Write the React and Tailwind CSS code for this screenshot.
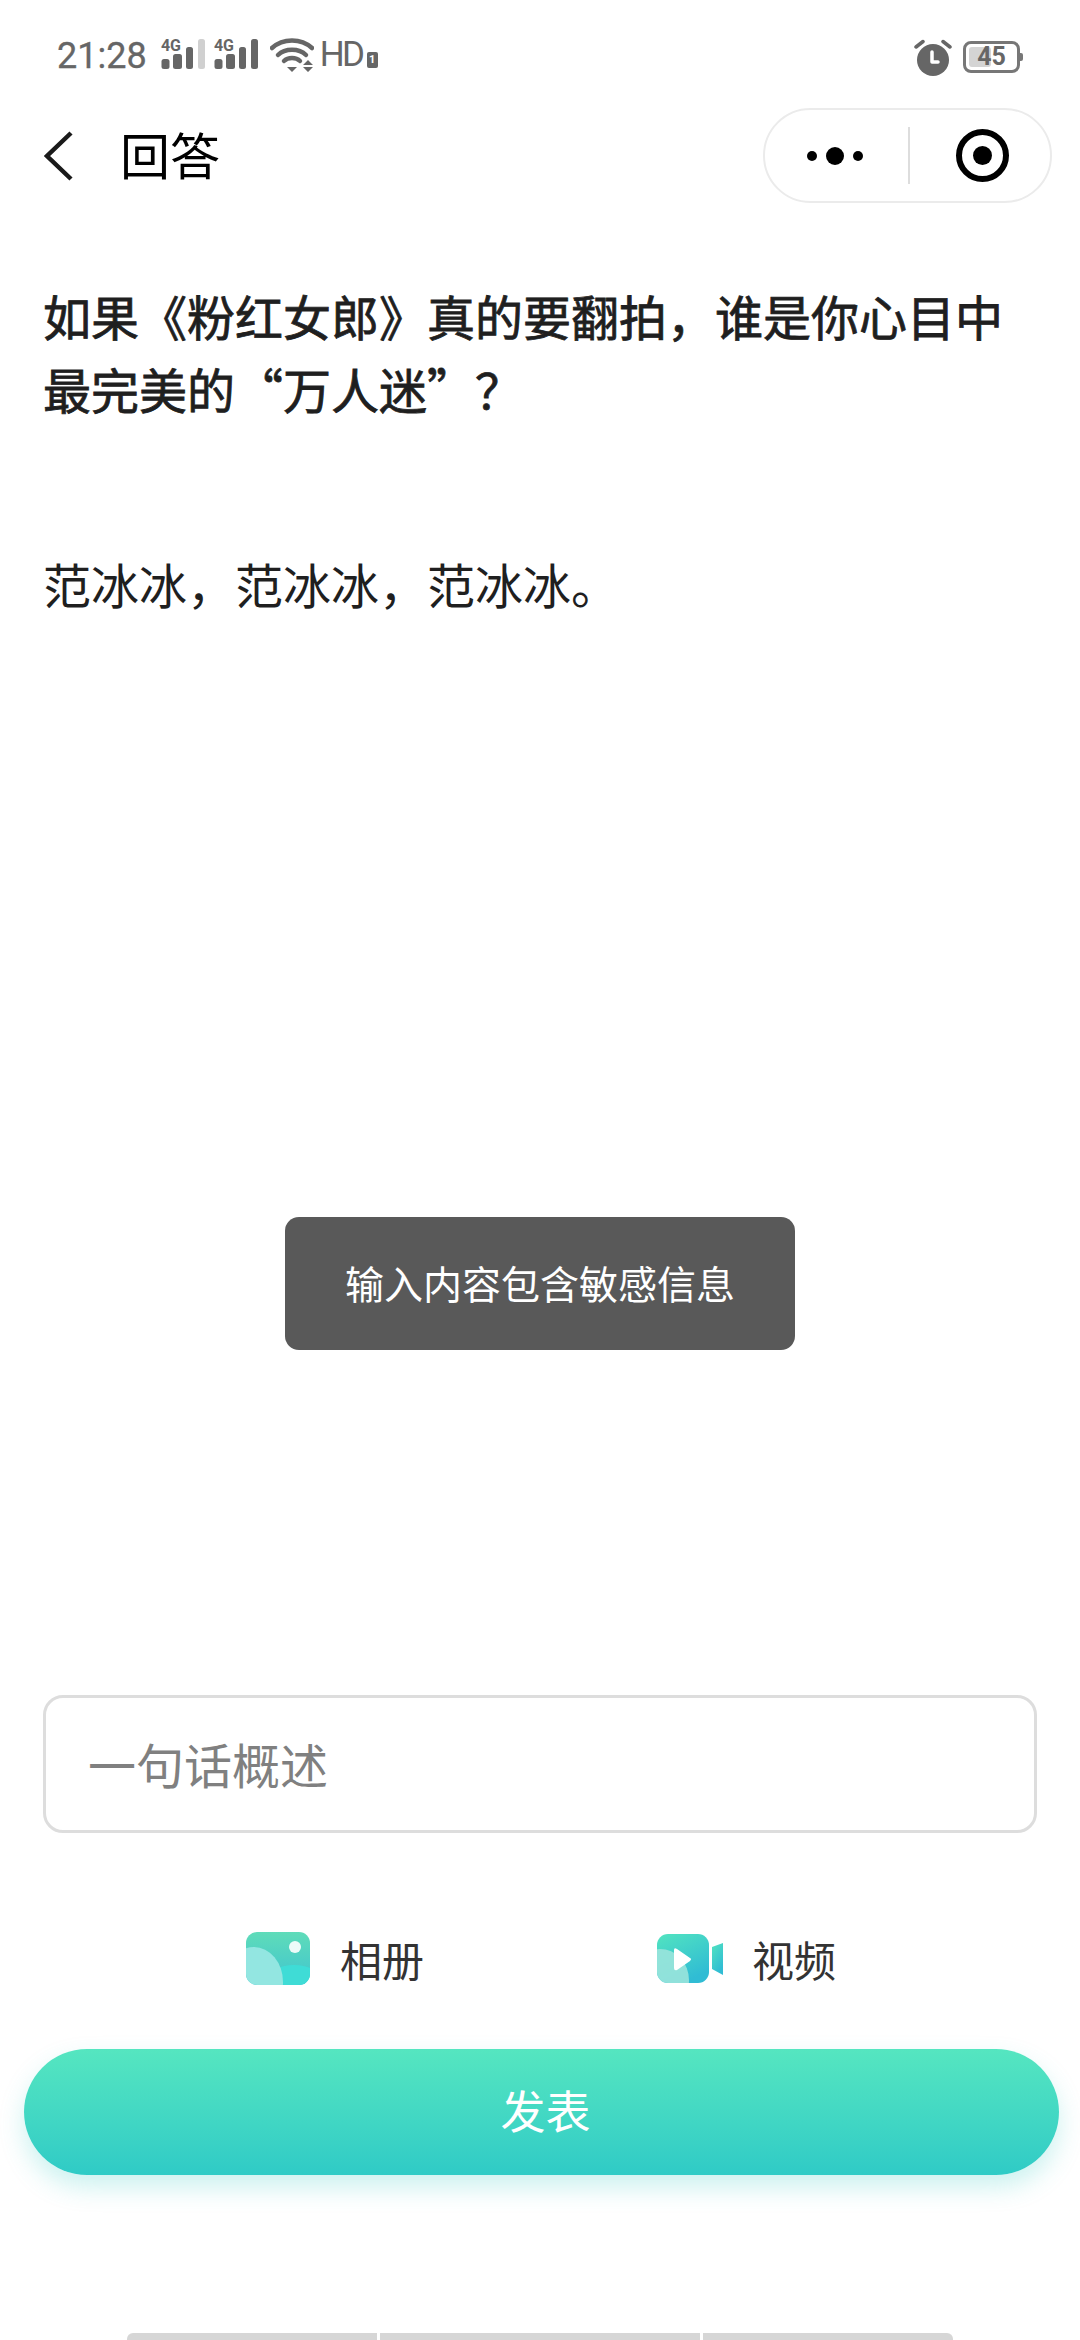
function Signal({ last }) {
  return (
    <svg width="44" height="32" viewBox="0 0 44 32" className="shrink-0 overflow-visible">
      <text x="0" y="12" fontSize="16" fontWeight="700" fontFamily="Roboto, sans-serif" fill="#666" textLength="20">4G</text>
      <rect x="0.5" y="20" width="8" height="10" rx="2.5" fill="#666" />
      <rect x="12" y="15" width="9" height="15" rx="2.5" fill="#666" />
      <rect x="25" y="8" width="7" height="22" rx="2.5" fill="#666" />
      <rect x="37" y="0" width="7" height="30" rx="2.5" fill={last} />
    </svg>
  );
}

function Wifi() {
  return (
    <svg width="44" height="34" viewBox="0 0 44 34" className="shrink-0">
      <path d="M2 10 C13 0 31 0 42 10" fill="none" stroke="#666" strokeWidth="4.5" strokeLinecap="round" />
      <path d="M8 17 C15 10 29 10 36 17" fill="none" stroke="#666" strokeWidth="4.5" strokeLinecap="round" />
      <path d="M14 23 C18 19 26 19 30 23" fill="none" stroke="#666" strokeWidth="4.5" strokeLinecap="round" />
      <path d="M17 29 H27 L22 34 Z" fill="#666" />
      <path d="M38 22 L43 27 H33 Z M33 29 H43 L38 34 Z" fill="#666" />
    </svg>
  );
}

function Alarm() {
  return (
    <svg width="38" height="38" viewBox="0 0 38 38">
      <circle cx="19" cy="22" r="16" fill="#666" />
      <path d="M2 9 L9 3.5 M36 9 L29 3.5" stroke="#666" strokeWidth="3.5" strokeLinecap="round" />
      <path d="M18 14 V24 H24" fill="none" stroke="#fff" strokeWidth="3.5" strokeLinecap="round" strokeLinejoin="round" />
    </svg>
  );
}

function AlbumIcon() {
  return (
    <svg width="64" height="53" viewBox="0 0 64 53">
      <defs>
        <linearGradient id="albumBg" x1="0" y1="0" x2="0" y2="1">
          <stop offset="0" stopColor="#5fdcb9" />
          <stop offset="1" stopColor="#3fc4d0" />
        </linearGradient>
        <clipPath id="albumClip">
          <rect width="64" height="53" rx="11" />
        </clipPath>
      </defs>
      <g clipPath="url(#albumClip)">
        <rect width="64" height="53" fill="url(#albumBg)" />
        <ellipse cx="48" cy="50" rx="28" ry="17" fill="#3fdcd6" />
        <ellipse cx="8" cy="50" rx="29" ry="35" fill="#93e6e1" />
      </g>
      <circle cx="49" cy="15" r="6" fill="#fff" fillOpacity="0.9" />
    </svg>
  );
}

function VideoIcon() {
  return (
    <svg width="66" height="49" viewBox="0 0 66 49">
      <defs>
        <linearGradient id="videoBg" x1="0" y1="0" x2="0.5" y2="1">
          <stop offset="0" stopColor="#52e4c0" />
          <stop offset="1" stopColor="#30bcd4" />
        </linearGradient>
        <clipPath id="videoClip">
          <rect width="52" height="49" rx="11" />
        </clipPath>
      </defs>
      <g clipPath="url(#videoClip)">
        <rect width="52" height="49" fill="url(#videoBg)" />
        <ellipse cx="3" cy="46" rx="29" ry="31" fill="#9ae4dc" fillOpacity="0.9" />
      </g>
      <path d="M17 16 Q17 13 20 15 L33 24 Q35 25 33 27 L20 36 Q17 37 17 34 Z" fill="#fff" />
      <path d="M55 13 L66 9 V41 L55 35 Z" fill="url(#videoBg)" />
    </svg>
  );
}

export default function App() {
  return (
    <div lang="zh-CN" className="relative h-[2340px] w-[1080px] flex flex-col overflow-hidden bg-white font-['Noto_Sans_CJK_SC',sans-serif] text-[#1a1a1a]">

      {/* status bar */}
      <div className="h-[108px] pt-[38px] pl-[57px] pr-[57px] flex items-start justify-between">
        <div className="flex items-start">
          <span className="font-['Roboto',sans-serif] [-webkit-text-stroke:0.3px_#666] text-[36px] leading-[36px] text-[#666] mr-[14px]">21:28</span>
          <div className="mr-[9px] mt-[1px]"><Signal last="#d0d0d0" /></div>
          <div className="mr-[12px] mt-[1px]"><Signal last="#666" /></div>
          <Wifi />
          <span className="ml-[6px] font-['Roboto',sans-serif] text-[35px] leading-[34px] tracking-[-2.5px] text-[#666]">HD</span>
          <span className="ml-[4px] mt-[14px] w-[11px] h-[16px] rounded-[2px] bg-[#666] text-white font-['Roboto',sans-serif] font-bold text-[11px] leading-[16px] text-center">1</span>
        </div>
        <div className="flex items-center gap-[11px]">
          <Alarm />
          <div className="relative flex items-center">
            <div className="relative w-[57px] h-[32px] rounded-[8px] border-[3px] border-[#777] flex items-center justify-center">
              <div className="absolute left-[3px] top-[3px] bottom-[3px] w-[22px] rounded-[3px] bg-[#d4d4d4]"></div>
              <span className="relative font-['Roboto',sans-serif] font-bold text-[25px] leading-[26px] text-[#666]">45</span>
            </div>
            <div className="w-[3px] h-[8px] rounded-r-[2px] bg-[#777]"></div>
          </div>
        </div>
      </div>

      {/* nav */}
      <div className="h-[95px] flex items-center justify-between pl-[44px] pr-[28px]">
        <div className="flex items-center">
          <svg width="30" height="50" viewBox="0 0 30 50" className="mr-[46px]">
            <path d="M27 2 L3 25 L27 48" fill="none" stroke="#1a1a1a" strokeWidth="4.5" />
          </svg>
          <span className="text-[50px] leading-[64px] text-black mb-[6px]">回答</span>
        </div>
        <div className="w-[289px] h-[95px] rounded-full border-2 border-[#ebebeb] flex items-center">
          <div className="w-[143px] flex items-center justify-center gap-[9px] pr-[3px]">
            <span className="w-[10px] h-[10px] rounded-full bg-black"></span>
            <span className="w-[18px] h-[18px] rounded-full bg-black"></span>
            <span className="w-[10px] h-[10px] rounded-full bg-black"></span>
          </div>
          <div className="w-[2px] h-[57px] bg-[#ddd]"></div>
          <div className="flex-1 flex items-center justify-center pl-[5px]">
            <div className="w-[53px] h-[53px] rounded-full border-[6px] border-black flex items-center justify-center">
              <span className="w-[19px] h-[19px] rounded-full bg-black"></span>
            </div>
          </div>
        </div>
      </div>

      {/* question and answer */}
      <div className="px-[43px] pt-[76px]">
        <h1 className="text-[48px] leading-[73px] font-normal [-webkit-text-stroke:0.8px_#1f1f1f] text-[#1f1f1f]">如果《粉红女郎》真的要翻拍，谁是你心目中最完美的“万人迷”？</h1>
        <p className="mt-[122px] text-[48px] leading-[73px] text-[#1f1f1f]">范冰冰，范冰冰，范冰冰。</p>
      </div>

      {/* summary input */}
      <div className="mt-[1075px] mx-[43px] h-[138px] rounded-[20px] border-[3px] border-[#dddddd] flex items-center pl-[42px] pb-[3px] text-[48px] text-[#808080]">一句话概述</div>

      {/* album and video */}
      <div className="mt-[90px] h-[70px] flex items-center text-[42px] text-[#333]">
        <div className="ml-[246px] w-[411px] flex items-center">
          <AlbumIcon />
          <span className="ml-[30px]">相册</span>
        </div>
        <div className="flex items-center">
          <VideoIcon />
          <span className="ml-[29px]">视频</span>
        </div>
      </div>

      {/* publish button */}
      <div className="mt-[56px] ml-[24px] mr-[21px] h-[126px] rounded-full bg-gradient-to-b from-[#55e6c0] to-[#2fcbc6] shadow-[0_12px_24px_rgba(50,205,195,0.25)] flex items-center justify-center pl-[8px] pb-[5px] text-[45px] text-white">发表</div>

      {/* home indicator */}
      <div className="mt-auto mx-[127px] h-[7px] flex gap-[3px]">
        <div className="w-[250px] rounded-tl-[6px] bg-[#d6d6d6]"></div>
        <div className="w-[320px] bg-[#d6d6d6]"></div>
        <div className="flex-1 rounded-tr-[6px] bg-[#d6d6d6]"></div>
      </div>

      {/* toast */}
      <div className="absolute left-[285px] top-[1217px] w-[510px] h-[133px] rounded-[14px] bg-[#595959] flex items-center justify-center pb-[3px] text-[39px] text-white">输入内容包含敏感信息</div>
    </div>
  );
}
